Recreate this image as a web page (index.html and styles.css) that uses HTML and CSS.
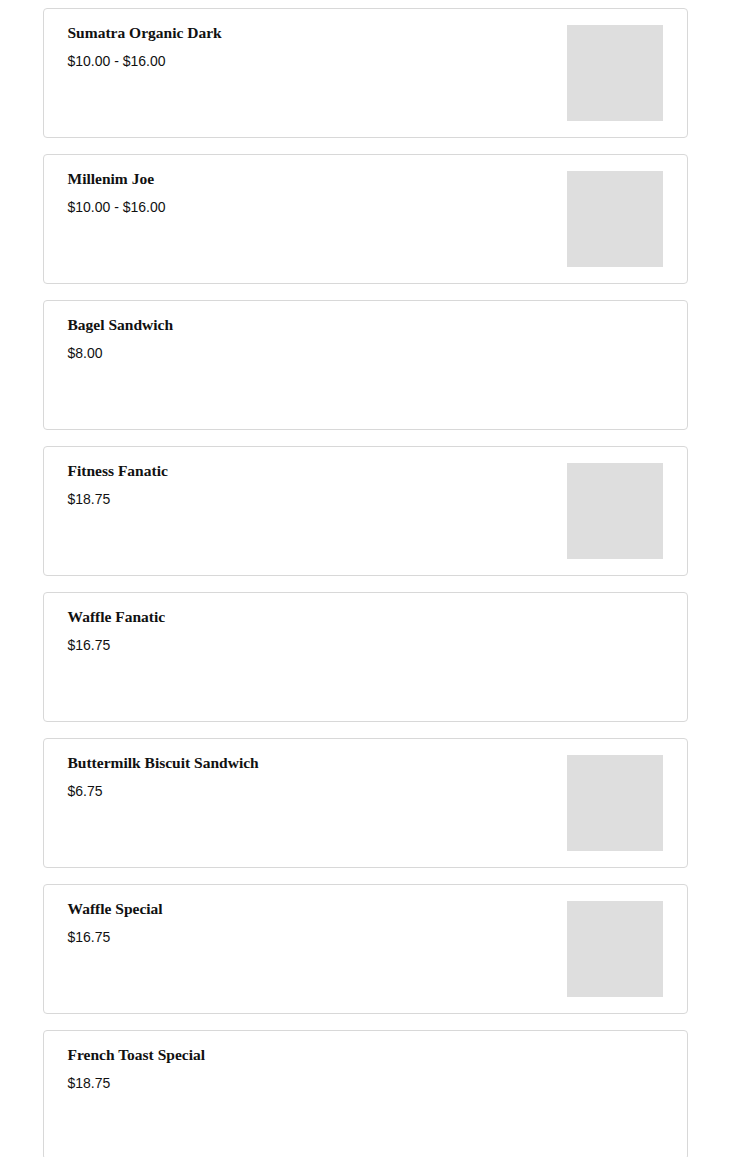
FILE: index.html
```html
<!DOCTYPE html>
<html>
<head>
  <title>Menu</title>
  <link rel="stylesheet" href="styles.css">
</head>
<body>
  <div class="menu">
    <div class="item">
      <div class="info">
        <h3>Sumatra Organic Dark</h3>
        <p class="price">$10.00 - $16.00</p>
      </div>
      <div class="thumb"></div>
    </div>
    <div class="item">
      <div class="info">
        <h3>Millenim Joe</h3>
        <p class="price">$10.00 - $16.00</p>
      </div>
      <div class="thumb"></div>
    </div>
    <div class="item">
      <div class="info">
        <h3>Bagel Sandwich</h3>
        <p class="price">$8.00</p>
      </div>
    </div>
    <div class="item">
      <div class="info">
        <h3>Fitness Fanatic</h3>
        <p class="price">$18.75</p>
      </div>
      <div class="thumb"></div>
    </div>
    <div class="item">
      <div class="info">
        <h3>Waffle Fanatic</h3>
        <p class="price">$16.75</p>
      </div>
    </div>
    <div class="item">
      <div class="info">
        <h3>Buttermilk Biscuit Sandwich</h3>
        <p class="price">$6.75</p>
      </div>
      <div class="thumb"></div>
    </div>
    <div class="item">
      <div class="info">
        <h3>Waffle Special</h3>
        <p class="price">$16.75</p>
      </div>
      <div class="thumb"></div>
    </div>
    <div class="item">
      <div class="info">
        <h3>French Toast Special</h3>
        <p class="price">$18.75</p>
      </div>
    </div>
  </div>
</body>
</html>
```

FILE: styles.css
```css
body {
  margin: 8px 0;
  background: #fff;
  color: #111;
}

.menu {
  width: 645px;
  margin: 0 auto;
  display: flex;
  flex-direction: column;
  gap: 16px;
}

.item {
  display: flex;
  justify-content: space-between;
  min-height: 96px;
  padding: 16px 24px;
  border: 1px solid #d8d8d8;
  border-radius: 4px;
}

.info h3 {
  margin: -1px 0 0;
  font-family: "Liberation Serif", "Times New Roman", serif;
  font-size: 15.5px;
  font-weight: bold;
  line-height: 18px;
}

.price {
  margin: 10px 0 0;
  font-family: "Liberation Sans", Arial, sans-serif;
  font-size: 14px;
  line-height: 18px;
}

.thumb {
  width: 96px;
  height: 96px;
  background: #dedede;
}
```
